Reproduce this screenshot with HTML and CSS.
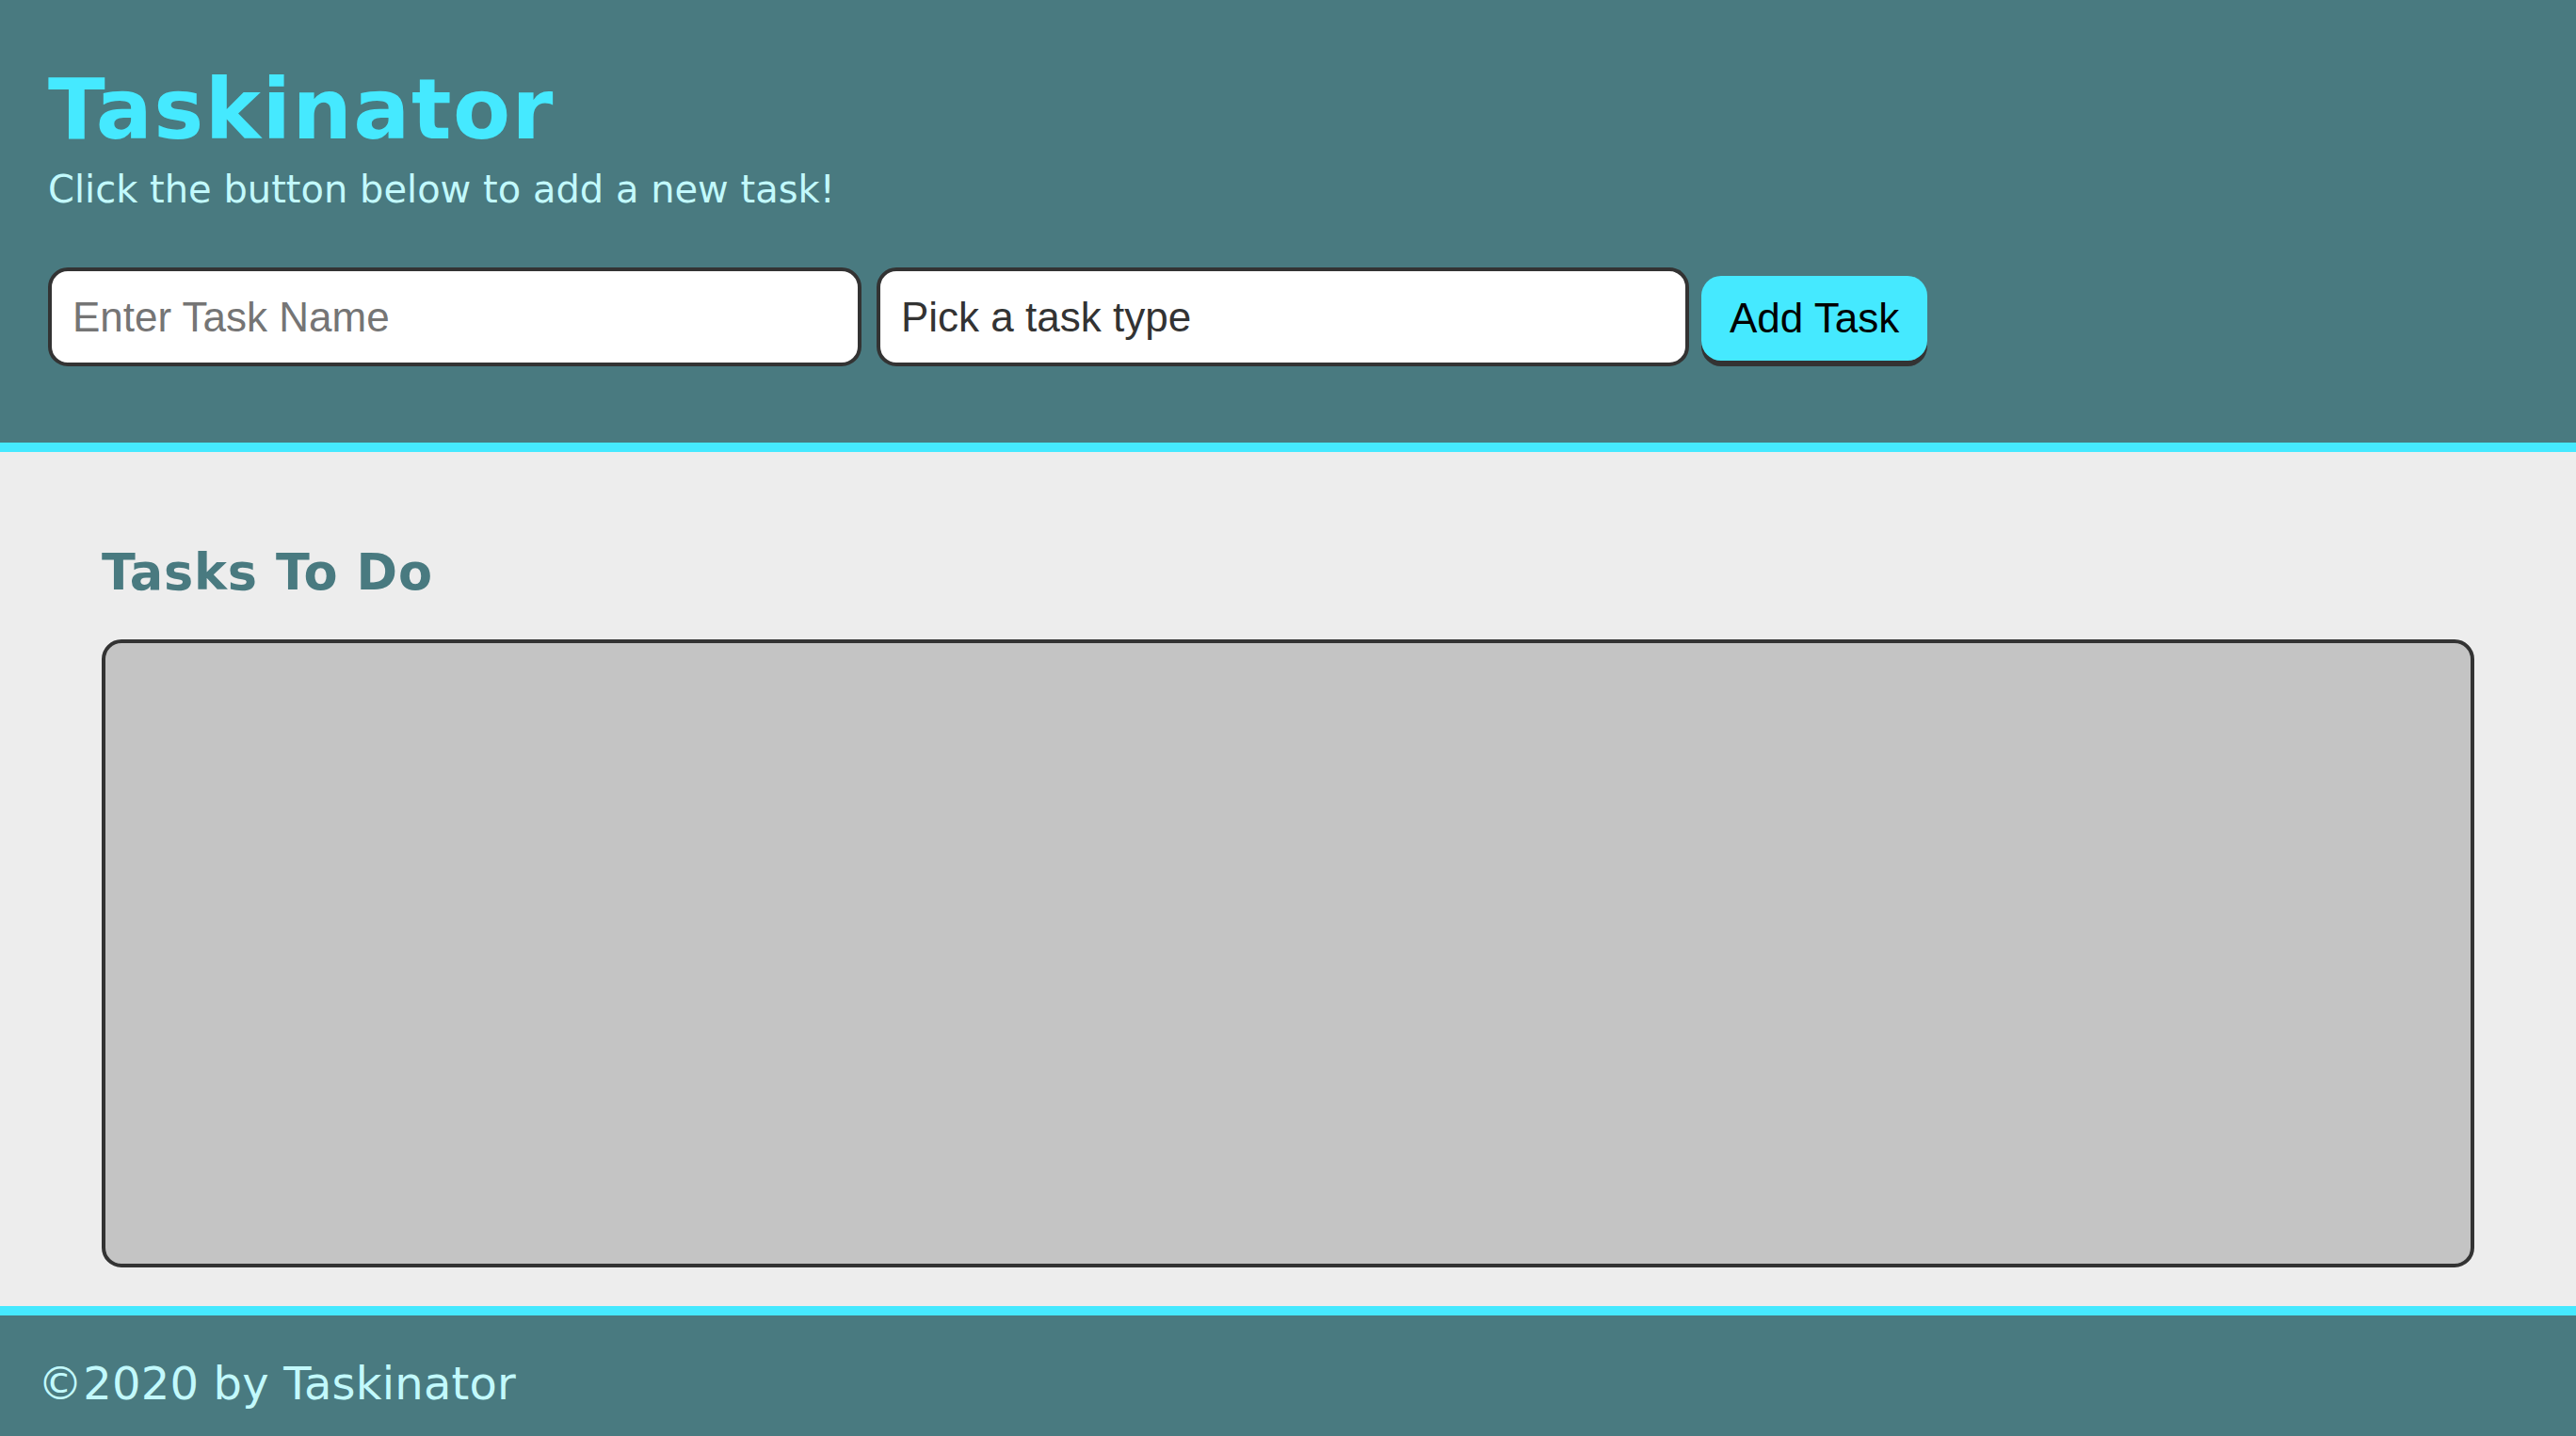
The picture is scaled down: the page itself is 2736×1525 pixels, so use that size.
FILE: index.html
```html
<!DOCTYPE html>
<html lang="en">
<head>
<meta charset="UTF-8">
<title>Taskinator</title>
<link rel="stylesheet" href="styles.css">
</head>
<body>
<header class="page-header">
  <h1 class="page-title">Taskinator</h1>
  <p class="page-subtitle">Click the button below to add a new task!</p>
  <form class="task-form">
    <input class="field" type="text" name="task-name" placeholder="Enter Task Name">
    <select class="field field-select" name="task-type">
      <option value="" selected>Pick a task type</option>
      <option value="Web">Web</option>
      <option value="Mobile">Mobile</option>
      <option value="Print">Print</option>
    </select>
    <button class="btn" type="submit">Add Task</button>
  </form>
</header>
<main class="page-content">
  <section class="task-list-wrapper">
    <h2 class="list-title">Tasks To Do</h2>
    <ul class="task-list"></ul>
  </section>
</main>
<footer class="page-footer">
  <h3 class="footer-text">&copy;2020 by Taskinator</h3>
</footer>
</body>
</html>
```
FILE: styles.css
```css
* {
  box-sizing: border-box;
}

html, body {
  margin: 0;
  padding: 0;
}

body {
  font-family: Verdana, "DejaVu Sans", sans-serif;
  background-color: #ededed;
}

.page-header {
  background-color: #497a80;
  border-bottom: 10px solid #45e9ff;
  padding: 64px 51px 81px 51px;
}

.page-title {
  margin: 0;
  font-size: 89px;
  line-height: 104px;
  font-weight: bold;
  letter-spacing: 1.5px;
  color: #45e9ff;
}

.page-subtitle {
  margin: 10px 0 0 0;
  font-size: 40px;
  line-height: 46px;
  color: #c2f9fc;
}

.task-form {
  margin-top: 60px;
  display: flex;
  align-items: flex-start;
  gap: 16px;
}

.field {
  width: 864px;
  height: 105px;
  border: 4px solid #333333;
  border-radius: 21px;
  background-color: #ffffff;
  padding: 0 20px 0 22px;
  font-family: "Liberation Sans", Arial, sans-serif;
  font-size: 44px;
  color: #333333;
  outline: none;
}

.field::placeholder {
  color: #757575;
}

.field-select {
  width: 863px;
  appearance: none;
  -webkit-appearance: none;
  color: #333333;
}

.btn {
  margin-top: 9px;
  margin-left: -3px;
  height: 90px;
  padding: 0 30px 0 30px;
  background-color: #45e9ff;
  border: none;
  border-radius: 21px;
  box-shadow: 0 6px 0 #333333;
  font-family: "Liberation Sans", Arial, sans-serif;
  font-size: 44px;
  color: #000000;
  cursor: pointer;
}

.page-content {
  padding: 97px 108px 41px 108px;
}

.list-title {
  margin: 0 0 41px 0;
  font-size: 52.5px;
  line-height: 61px;
  font-weight: bold;
  letter-spacing: 0.8px;
  color: #497a80;
}

.task-list {
  margin: 0;
  padding: 0;
  list-style: none;
  height: 667px;
  background-color: #c4c4c4;
  border: 4px solid #333333;
  border-radius: 21px;
}

.page-footer {
  background-color: #497a80;
  border-top: 10px solid #45e9ff;
  padding: 44px 40px 28px 40px;
}

.footer-text {
  margin: 0;
  font-size: 48px;
  line-height: 56px;
  font-weight: normal;
  letter-spacing: 0.2px;
  color: #c2f9fc;
}
```
